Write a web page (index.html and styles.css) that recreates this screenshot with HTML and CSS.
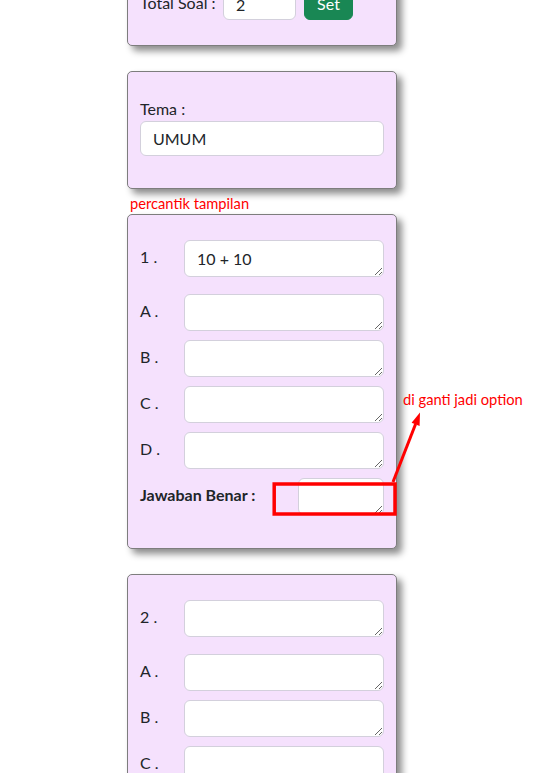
FILE: index.html
```html
<!DOCTYPE html>
<html>
<head>
<meta charset="utf-8">
<link rel="stylesheet" href="styles.css">
</head>
<body>
<div class="page">
  <div class="card card-first">
    <div class="total-row">
      <label class="lbl lbl-total">Total Soal :</label>
      <input class="ctl ctl-num" value="2">
      <button class="btn-set">Set</button>
    </div>
  </div>

  <div class="card card-tema">
    <label class="lbl lbl-block">Tema :</label>
    <input class="ctl" value="UMUM">
  </div>

  <div class="card card-q">
    <div class="row row-q"><span class="lbl lbl-col">1 .</span><textarea class="ta">10 + 10</textarea></div>
    <div class="row"><span class="lbl lbl-col">A .</span><textarea class="ta"></textarea></div>
    <div class="row"><span class="lbl lbl-col">B .</span><textarea class="ta"></textarea></div>
    <div class="row"><span class="lbl lbl-col">C .</span><textarea class="ta"></textarea></div>
    <div class="row"><span class="lbl lbl-col">D .</span><textarea class="ta"></textarea></div>
    <div class="row row-ans"><span class="lbl lbl-bold">Jawaban Benar :</span><textarea class="ta ta-ans"></textarea></div>
  </div>

  <div class="card card-q">
    <div class="row row-q"><span class="lbl lbl-col">2 .</span><textarea class="ta"></textarea></div>
    <div class="row"><span class="lbl lbl-col">A .</span><textarea class="ta"></textarea></div>
    <div class="row"><span class="lbl lbl-col">B .</span><textarea class="ta"></textarea></div>
    <div class="row"><span class="lbl lbl-col">C .</span><textarea class="ta"></textarea></div>
    <div class="row"><span class="lbl lbl-col">D .</span><textarea class="ta"></textarea></div>
    <div class="row row-ans"><span class="lbl lbl-bold">Jawaban Benar :</span><textarea class="ta ta-ans"></textarea></div>
  </div>
</div>

<div class="note note-tampilan">percantik tampilan</div>
<div class="note note-option">di ganti jadi option</div>
<svg class="overlay" width="534" height="773" viewBox="0 0 534 773">
  <rect x="274.2" y="484" width="120.8" height="30" fill="none" stroke="#ff0000" stroke-width="3.5"/>
  <line x1="393" y1="482" x2="415.6" y2="424" stroke="#ff0000" stroke-width="3"/>
  <polygon points="420,412.5 411.6,422.8 419.6,426" fill="#ff0000"/>
</svg>
</body>
</html>
```

FILE: styles.css
```css
html, body {
  margin: 0;
  padding: 0;
  background: #ffffff;
  overflow: hidden;
}

body {
  font-family: Lato, "Liberation Sans", sans-serif;
  font-size: 16px;
  line-height: 24px;
  color: #212529;
  position: relative;
  width: 534px;
  height: 773px;
}

.page {
  width: 270px;
  margin-left: 127px;
  margin-top: -43px;
  display: flex;
  flex-direction: column;
  gap: 25px;
}

.card {
  box-sizing: border-box;
  width: 270px;
  background: #f5e1fd;
  border: 1px solid #7d7d7d;
  border-radius: 5px;
  box-shadow: 5px 5px 7px rgba(0, 0, 0, 0.45);
  padding: 25px 12px 33px 12px;
}

.card-first {
  padding: 24px 12px 25px 12px;
}

.card-tema {
  padding: 25px 12px 32px 12px;
}

.total-row {
  display: flex;
  align-items: flex-end;
}

.lbl {
  color: #212529;
}

.lbl-total {
  width: 83px;
  line-height: 24px;
  padding-bottom: 5px;
}

.lbl-block {
  display: block;
}

.ctl {
  box-sizing: border-box;
  display: block;
  width: 100%;
  height: 35px;
  padding: 5px 12px;
  font-family: Lato, "Liberation Sans", sans-serif;
  font-size: 16px;
  line-height: 24px;
  color: #212529;
  background: #ffffff;
  border: 1px solid #d3d0dc;
  border-radius: 6px;
  outline: none;
  margin: 0;
}

.ctl-num {
  width: 73px;
  height: 38px;
  padding: 9px 12px 3px 12px;
}

.btn-set {
  box-sizing: border-box;
  height: 38px;
  width: 49px;
  margin: 0 0 0 8px;
  background: #198754;
  color: #ffffff;
  border: 1px solid #198754;
  border-radius: 6px;
  font-family: Lato, "Liberation Sans", sans-serif;
  font-size: 16px;
  line-height: 24px;
  padding: 9px 0 3px 0;
}

.row {
  display: flex;
  align-items: center;
  margin-top: 9px;
}

.row-q {
  margin-top: 0;
  margin-bottom: 17px;
}

.lbl-col {
  width: 44px;
  flex: none;
  margin-top: -4px;
}

.lbl-bold {
  font-weight: 700;
  margin-top: -3px;
}

.row-ans {
  justify-content: space-between;
}

.ta {
  box-sizing: border-box;
  display: block;
  flex: 1;
  height: 37px;
  padding: 6px 12px;
  font-family: Lato, "Liberation Sans", sans-serif;
  font-size: 16px;
  line-height: 24px;
  color: #212529;
  background: #ffffff;
  border: 1px solid #d3d0dc;
  border-radius: 6px;
  outline: none;
  resize: vertical;
  margin: 0;
  overflow: hidden;
}

.ta-ans {
  flex: none;
  width: 86px;
}

.note {
  position: absolute;
  color: #ff0000;
  font-family: Lato, "Liberation Sans", sans-serif;
  font-size: 14.7px;
  line-height: 16px;
  white-space: nowrap;
}

.note-tampilan {
  left: 130px;
  top: 195px;
}

.note-option {
  left: 403px;
  top: 391px;
}

.overlay {
  position: absolute;
  left: 0;
  top: 0;
  pointer-events: none;
}
```
